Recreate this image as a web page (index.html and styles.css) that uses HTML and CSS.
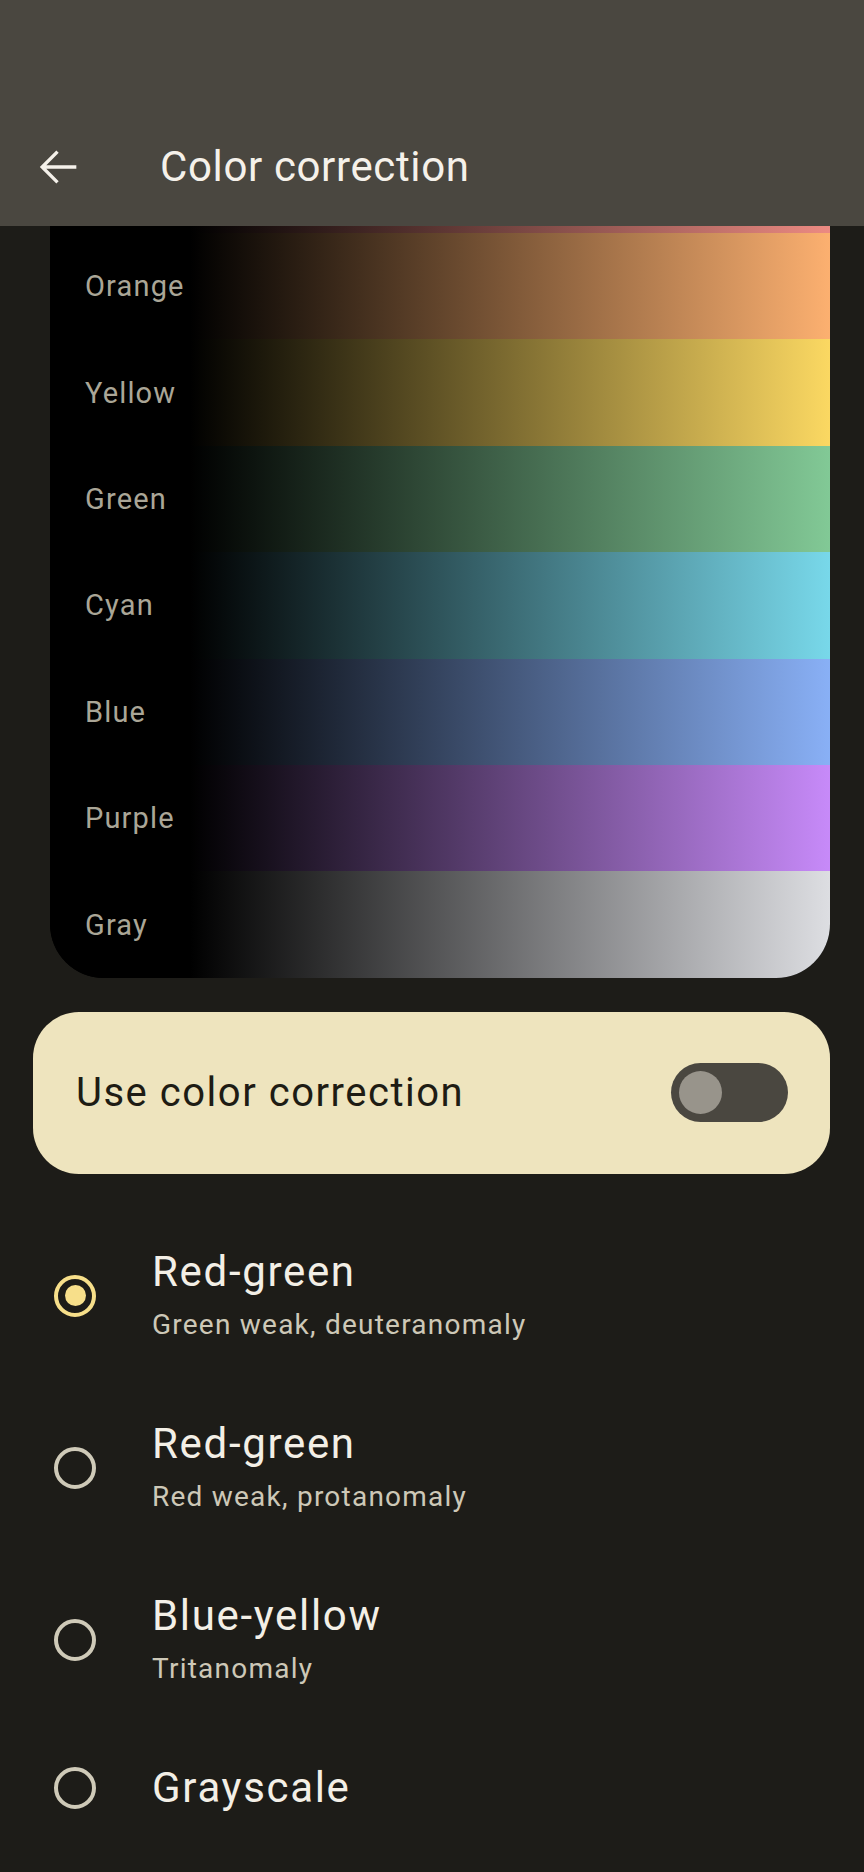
FILE: index.html
```html
<!DOCTYPE html>
<html lang="en">
<head>
  <meta charset="UTF-8">
  <meta name="viewport" content="width=device-width, initial-scale=1.0">
  <title>Color correction</title>
  <link rel="stylesheet" href="styles.css">
</head>
<body>

<header class="app-bar">
  <button class="back-btn" aria-label="Back">
    <svg width="50" height="50" viewBox="0 0 24 24">
      <path d="M20 12H4.8M11.2 5.2L4.4 12l6.8 6.8" fill="none" stroke="#f5f1ea" stroke-width="1.6" stroke-linecap="square"/>
    </svg>
  </button>
  <h1>Color correction</h1>
</header>

<div class="preview">
  <div class="swatch swatch-red"></div>
  <div class="swatch swatch-orange">Orange</div>
  <div class="swatch swatch-yellow">Yellow</div>
  <div class="swatch swatch-green">Green</div>
  <div class="swatch swatch-cyan">Cyan</div>
  <div class="swatch swatch-blue">Blue</div>
  <div class="swatch swatch-purple">Purple</div>
  <div class="swatch swatch-gray">Gray</div>
</div>

<div class="main-switch">
  <span class="main-switch-label">Use color correction</span>
  <span class="switch"><span class="thumb"></span></span>
</div>

<ul class="options">
  <li class="option">
    <span class="radio checked"></span>
    <div class="option-text">
      <div class="option-title">Red-green</div>
      <div class="option-summary">Green weak, deuteranomaly</div>
    </div>
  </li>
  <li class="option">
    <span class="radio"></span>
    <div class="option-text">
      <div class="option-title">Red-green</div>
      <div class="option-summary">Red weak, protanomaly</div>
    </div>
  </li>
  <li class="option">
    <span class="radio"></span>
    <div class="option-text">
      <div class="option-title">Blue-yellow</div>
      <div class="option-summary">Tritanomaly</div>
    </div>
  </li>
  <li class="option">
    <span class="radio"></span>
    <div class="option-text">
      <div class="option-title">Grayscale</div>
    </div>
  </li>
</ul>

</body>
</html>
```

FILE: styles.css
```css
body {
  font-family: Roboto, 'Noto Sans', sans-serif;
  margin: 0;
  padding: 0;
  background-color: #1d1c18;
  width: 864px;
  min-height: 1872px;
}

.app-bar {
  height: 226px;
  box-sizing: border-box;
  padding-top: 108px;
  display: flex;
  align-items: center;
  background-color: #4a4740;
}

.back-btn {
  width: 50px;
  height: 50px;
  margin-left: 33px;
  padding: 0;
  border: none;
  background: none;
  display: flex;
}

.app-bar h1 {
  margin: 0 0 0 77px;
  font-size: 42px;
  font-weight: 400;
  letter-spacing: 0.015em;
  color: #f5f1ea;
  line-height: 50px;
}

.preview {
  margin: 0 34px 0 50px;
  border-radius: 0 0 54px 54px;
  overflow: hidden;
  background-color: #000;
}

.swatch {
  height: 106.4px;
  display: flex;
  align-items: center;
  padding-left: 35px;
  font-size: 29px;
  letter-spacing: 0.04em;
  color: #aaa697;
}

.swatch-red { height: 7px; background: linear-gradient(to right, #000 140px, #ec8a82); }
.swatch-orange { background: linear-gradient(to right, #000 140px, #fcb070); }
.swatch-yellow { background: linear-gradient(to right, #000 140px, #fbd862); }
.swatch-green { background: linear-gradient(to right, #000 140px, #82c996); }
.swatch-cyan { background: linear-gradient(to right, #000 140px, #78d8ea); }
.swatch-blue { background: linear-gradient(to right, #000 140px, #89b0f6); }
.swatch-purple { background: linear-gradient(to right, #000 140px, #c78af9); }
.swatch-gray { background: linear-gradient(to right, #000 140px, #dddee2); }

.main-switch {
  margin: 34px 34px 0 33px;
  height: 162px;
  box-sizing: border-box;
  padding: 0 42px 0 43px;
  border-radius: 46px;
  background-color: #eee4be;
  display: flex;
  align-items: center;
  justify-content: space-between;
}

.main-switch-label {
  font-size: 40px;
  letter-spacing: 0.038em;
  color: #1e1c14;
}

.switch {
  width: 117px;
  height: 59px;
  border-radius: 30px;
  background-color: #4a4740;
  display: flex;
  align-items: center;
  padding-left: 8px;
  box-sizing: border-box;
}

.thumb {
  width: 43px;
  height: 43px;
  border-radius: 50%;
  background-color: #98948b;
}

.options {
  list-style: none;
  margin: 36px 0 0 0;
  padding: 0;
}

.option {
  display: flex;
  align-items: center;
  padding: 37px 0;
}

.radio {
  width: 42px;
  height: 42px;
  box-sizing: border-box;
  border: 4px solid #cfcab8;
  border-radius: 50%;
  margin-left: 54px;
  margin-right: 56px;
  display: flex;
  align-items: center;
  justify-content: center;
  flex-shrink: 0;
}

.radio.checked {
  border-color: #f7df8a;
}

.radio.checked::after {
  content: "";
  width: 21px;
  height: 21px;
  border-radius: 50%;
  background-color: #f7df8a;
}

.option-title {
  font-size: 42px;
  line-height: 50px;
  letter-spacing: 0.04em;
  color: #f3efe6;
}

.option-summary {
  margin-top: 8px;
  font-size: 28px;
  line-height: 40px;
  letter-spacing: 0.044em;
  color: #cdc8b7;
}
```
